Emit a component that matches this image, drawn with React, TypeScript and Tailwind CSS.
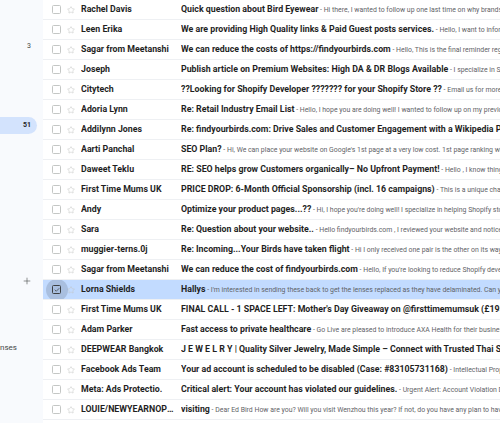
import React from 'react';
import { Star, Plus, Check } from 'lucide-react';

type Mail = {
  from: string;
  subject: string;
  snippet: string;
  selected?: boolean;
};

const mails: Mail[] = [
  { from: 'Rachel Davis', subject: 'Quick question about Bird Eyewear', snippet: 'Hi there, I wanted to follow up one last time on why brands trust us with their growth' },
  { from: 'Leen Erika', subject: 'We are providing High Quality links & Paid Guest posts services.', snippet: 'Hello, I want to inform you now' },
  { from: 'Sagar from Meetanshi', subject: 'We can reduce the costs of https://findyourbirds.com', snippet: 'Hello, This is the final reminder regarding our offer' },
  { from: 'Joseph', subject: 'Publish article on Premium Websites: High DA & DR Blogs Available', snippet: 'I specialize in SEO link building' },
  { from: 'Citytech', subject: '??Looking for Shopify Developer ??????? for your Shopify Store ??', snippet: 'Email us for more information' },
  { from: 'Adoria Lynn', subject: 'Re: Retail Industry Email List', snippet: 'Hello, I hope you are doing well! I wanted to follow up on my previous email' },
  { from: 'Addilynn Jones', subject: 'Re: findyourbirds.com: Drive Sales and Customer Engagement with a Wikipedia Presence', snippet: 'Hello' },
  { from: 'Aarti Panchal', subject: 'SEO Plan?', snippet: "Hi, We can place your website on Google's 1st page at a very low cost. 1st page ranking will bring" },
  { from: 'Daweet Teklu', subject: 'RE: SEO helps grow Customers organically– No Upfront Payment!', snippet: 'Hello , I know things get busy, but' },
  { from: 'First Time Mums UK', subject: 'PRICE DROP: 6-Month Official Sponsorship (incl. 16 campaigns)', snippet: 'This is a unique chance to position your brand' },
  { from: 'Andy', subject: 'Optimize your product pages...??', snippet: "Hi, I hope you're doing well! I specialize in helping Shopify store owners" },
  { from: 'Sara', subject: 'Re: Question about your website..', snippet: 'Hello findyourbirds.com , I reviewed your website and noticed some issues' },
  { from: 'muggier-terns.0j', subject: 'Re: Incoming...Your Birds have taken flight', snippet: 'Hi I only received one pair is the other on its way Thanks' },
  { from: 'Sagar from Meetanshi', subject: 'We can reduce the cost of findyourbirds.com', snippet: "Hello, If you're looking to reduce Shopify development costs" },
  { from: 'Lorna Shields', subject: 'Hallys', snippet: "I'm interested in sending these back to get the lenses replaced as they have delaminated. Can you help", selected: true },
  { from: 'First Time Mums UK', subject: "FINAL CALL - 1 SPACE LEFT: Mother's Day Giveaway on @firsttimemumsuk (£195)", snippet: 'With 4M Instagram followers' },
  { from: 'Adam Parker', subject: 'Fast access to private healthcare', snippet: 'Go Live are pleased to introduce AXA Health for their business healthcare' },
  { from: 'DEEPWEAR Bangkok', subject: 'J E W E L R Y | Quality Silver Jewelry, Made Simple – Connect with Trusted Thai Suppliers', snippet: 'Partner with us' },
  { from: 'Facebook Ads Team', subject: 'Your ad account is scheduled to be disabled (Case: #83105731168)', snippet: 'Intellectual Property Rights Violation' },
  { from: 'Meta: Ads Protectio.', subject: 'Critical alert: Your account has violated our guidelines.', snippet: 'Urgent Alert: Account Violation Detected' },
  { from: 'LOUIE/NEWYEARNOPTIONS', subject: 'visiting', snippet: 'Dear Ed Bird How are you? Will you visit Wenzhou this year? If not, do you have any plan to have a trip' },
];

function MailRow({ mail }: { mail: Mail }) {
  return (
    <div
      className={`h-[20px] flex items-center border-b border-[#eef0f3] whitespace-nowrap overflow-hidden ${
        mail.selected ? 'bg-[#c2dbff]' : 'bg-white'
      }`}
    >
      {/* checkbox */}
      <div className="relative w-[9px] h-[9px] ml-[9px] shrink-0 flex items-center justify-center">
        {mail.selected && (
          <div className="absolute w-[22px] h-[22px] rounded-full bg-[#8fa3bf]/50" />
        )}
        <div
          className={`relative w-[9px] h-[9px] rounded-[1.5px] border flex items-center justify-center ${
            mail.selected ? 'border-[#3c4043]' : 'border-[#c4c7c5]'
          }`}
        >
          {mail.selected && <Check size={6} strokeWidth={3} className="text-[#3c4043]" />}
        </div>
      </div>

      {/* star */}
      <Star size={8} strokeWidth={1.6} className="ml-[6px] shrink-0 text-[#c4c7c5]" />

      <div className="ml-[6px] w-[100px] shrink-0 pr-[5px] truncate font-bold text-[#1f1f1f]">
        {mail.from}
      </div>

      <div className="flex-1 min-w-0 overflow-hidden">
        <span className="font-bold text-[#1f1f1f]">{mail.subject}</span>
        <span className="text-[6.9px] text-[#5f6368]"> - {mail.snippet}</span>
      </div>
    </div>
  );
}

export default function App() {
  return (
    <div className="w-[500px] h-[423px] flex overflow-hidden bg-white font-['Roboto','Arial',sans-serif] text-[8.8px] leading-none">
      {/* ===== sidebar (clipped) ===== */}
      <div className="w-[43px] shrink-0 bg-[#f8fafd] flex flex-col">
        <div className="h-[40px]" />
        <div className="h-[13px] flex items-center justify-end pr-[12px] text-[7px] text-[#444746]">3</div>
        <div className="mt-[64px] h-[17px] w-[37px] rounded-r-full bg-[#d3e3fd] flex items-center justify-end pr-[6px] text-[7px] font-bold text-[#1f1f1f]">
          51
        </div>
        <div className="mt-[140px] h-[14px] flex items-center justify-end pr-[11px] text-[#444746]">
          <Plus size={10} strokeWidth={1.4} />
        </div>
        <div className="mt-[54px] h-[12px] flex items-center text-[8px] text-[#444746]">nses</div>
      </div>

      {/* ===== mail list ===== */}
      <div className="flex-1 min-w-0 flex flex-col">
        {mails.map((m, i) => (
          <MailRow key={i} mail={m} />
        ))}
      </div>
    </div>
  );
}
